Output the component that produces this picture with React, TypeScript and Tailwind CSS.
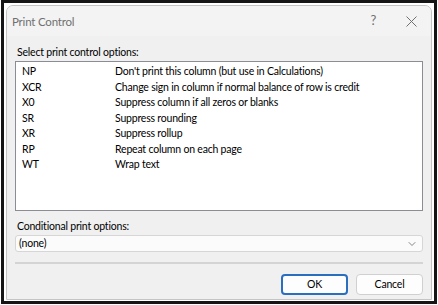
import { ChevronDown } from 'lucide-react'

const options = [
  { code: 'NP', text: "Don't print this column (but use in Calculations)" },
  { code: 'XCR', text: 'Change sign in column if normal balance of row is credit' },
  { code: 'X0', text: 'Suppress column if all zeros or blanks' },
  { code: 'SR', text: 'Suppress rounding' },
  { code: 'XR', text: 'Suppress rollup' },
  { code: 'RP', text: 'Repeat column on each page' },
  { code: 'WT', text: 'Wrap text' },
]

export default function App() {
  return (
    <div className="w-[438px] h-[305px] bg-white px-[1px] pb-[1px] font-['Lato',sans-serif] text-[10.5px] tracking-[-0.2px] text-black">
      <div className="h-full border-[3px] border-[#151515] bg-white pt-[2px] px-[2px] pb-[1px]">
        <div className="h-full flex flex-col border border-[#c4c4c4] rounded-t-[7px] bg-[#f0f0f0] overflow-hidden">
          {/* title bar */}
          <div className="h-[30px] shrink-0 flex items-center bg-[#f3f3f3] pl-[5px] pr-[14px]">
            <span className="text-[#707070] text-[11.5px] pt-[2px]">Print Control</span>
            <span className="ml-auto text-[#707070] text-[13px] mr-[30px]">?</span>
            <svg width="11" height="11" viewBox="0 0 11 11" className="text-[#707070]">
              <path d="M0.5 0.5 L10.5 10.5 M10.5 0.5 L0.5 10.5" stroke="currentColor" strokeWidth="1" />
            </svg>
          </div>

          <div className="flex-1 flex flex-col px-[8px]">
            <div className="pl-[2px] pt-[9px] leading-[15px]">Select print control options:</div>
            <div className="mt-[1px] h-[150px] bg-white border border-[#8a8d93] pt-[2px] pl-[6px]">
              {options.map((o) => (
                <div key={o.code} className="flex h-[15.6px] items-center">
                  <span className="w-[93px]">{o.code}</span>
                  <span>{o.text}</span>
                </div>
              ))}
            </div>

            <div className="pl-[2px] pt-[8px] leading-[15px]">Conditional print options:</div>
            <div className="mt-[1px] h-[17px] flex items-center bg-[#fbfbfb] border border-[#d6d6d6] rounded-[3px] pl-[3px] pr-[4px]">
              <span>(none)</span>
              <ChevronDown className="ml-auto text-[#5f5f5f]" size={12} strokeWidth={1.5} />
            </div>

            <div className="mt-[10px] h-[2px] bg-[#d4d4d4]" />

            <div className="mt-[10px] flex justify-end gap-[8px]">
              <button className="w-[67px] h-[21px] rounded-[4px] border-[2px] border-[#2a6fbf] bg-[#fdfdfd] text-[10.5px] leading-none">
                OK
              </button>
              <button className="w-[67px] h-[21px] rounded-[4px] border border-[#d0d0d0] bg-[#fdfdfd] text-[10.5px] leading-none">
                Cancel
              </button>
            </div>
          </div>
        </div>
      </div>
    </div>
  )
}
